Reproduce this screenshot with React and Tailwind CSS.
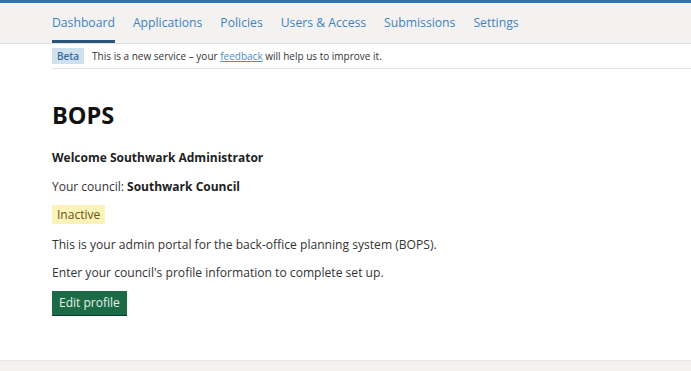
import React from "react";

const navItems = ["Dashboard", "Applications", "Policies", "Users & Access", "Submissions", "Settings"];

const App = () => {
  return (
    <div className="flex flex-col w-[691px] h-[371px] overflow-hidden bg-white font-['Open_Sans',sans-serif] text-[#0b0c0c]">
      {/* Top bar */}
      <div className="h-[3px] bg-[#2c73b6]" />

      {/* Navigation */}
      <nav className="bg-[#f3f2f1] border-b border-[#e2e2e2] h-[41px] pl-[52px]">
        <ul className="flex gap-[18px] h-full">
          {navItems.map((item, i) => (
            <li
              key={item}
              className={`flex items-center pt-[3px] text-[12.2px] text-[#3c82bf] border-b-[3px] ${
                i === 0 ? "border-[#2a5575]" : "border-transparent"
              }`}
            >
              {item}
            </li>
          ))}
        </ul>
      </nav>

      {/* Beta banner */}
      <div className="pl-[52px]">
        <div className="flex items-center gap-[8px] h-[25px] border-b border-[#e3e3e3] text-[10px]">
          <span className="bg-[#cfe0ef] text-[#3a6c9a] font-semibold px-[5px] leading-[16px]">Beta</span>
          <span className="text-[#333]">
            This is a new service – your{" "}
            <a href="#" className="text-[#4d8cc4] underline">feedback</a> will help us to improve it.
          </span>
        </div>
      </div>

      {/* Main content */}
      <main className="flex-1 pl-[52px] pt-[31px]">
        <h1 className="text-[23.5px] font-bold leading-[30px] text-[#111]">BOPS</h1>
        <p className="mt-[19px] text-[12px] font-bold text-[#222]">Welcome Southwark Administrator</p>
        <p className="mt-[11px] text-[12px] text-[#333]">
          Your council: <span className="font-bold text-[#222]">Southwark Council</span>
        </p>
        <span className="inline-block mt-[9px] bg-[#fdf3b8] text-[#5c5320] text-[12px] px-[5px] leading-[19px]">Inactive</span>
        <p className="mt-[11px] text-[12.1px] text-[#333]">This is your admin portal for the back-office planning system (BOPS).</p>
        <p className="mt-[10px] text-[12.1px] text-[#333]">Enter your council's profile information to complete set up.</p>
        <button className="mt-[9px] bg-[#1b6b47] text-[#e6f0ea] text-[12px] px-[7px] h-[24px] shadow-[0_1px_0_#0d3d26]">
          Edit profile
        </button>
      </main>

      {/* Footer */}
      <footer className="h-[11px] bg-[#f3f2f1] border-t border-[#e6e6e6]" />
    </div>
  );
};

export default App;
